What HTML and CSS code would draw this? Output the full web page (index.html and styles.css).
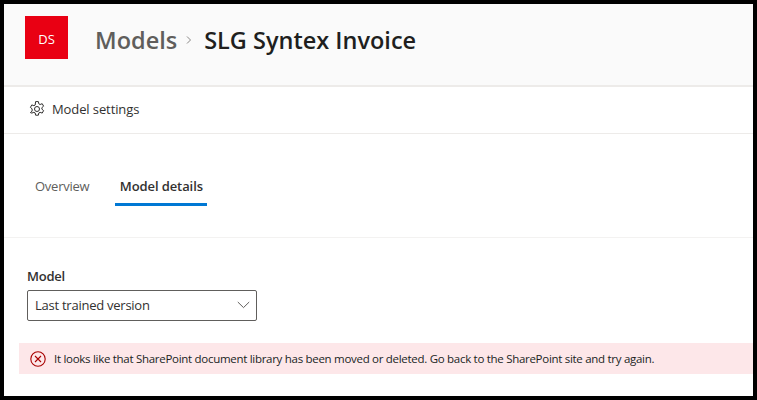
FILE: index.html
```html
<!DOCTYPE html>
<html lang="en">
<head>
<meta charset="utf-8">
<title>SLG Syntex Invoice</title>
<link rel="stylesheet" href="styles.css">
</head>
<body>
<div class="frame">
  <header class="header">
    <div class="avatar">DS</div>
    <div class="crumbs">
      <span class="crumb">Models</span>
      <svg class="crumb-sep" width="8" height="10" viewBox="0 0 8 10"><path d="M2 1.500 5.500 5 2 8.500" fill="none" stroke="#8a8886" stroke-width="1"/></svg>
      <span class="crumb-current">SLG Syntex Invoice</span>
    </div>
  </header>
  <div class="toolbar">
    <svg class="gear" width="16" height="16" viewBox="0 0 16 16" fill="none" stroke="#323130" stroke-width="1" stroke-linejoin="round"><path d="M6.600 .6h2.800l.4 2.200 1.300.7 2.100-.8 1.400 2.500-1.700 1.400v1.600l1.700 1.400-1.400 2.500-2.100-.8-1.300.7-.4 2.200H6.600l-.4-2.200-1.300-.7-2.100.8L1.400 11.600l1.700-1.400V7.800L1.400 6.400l1.400-2.500 2.100.8 1.300-.7z"/><circle cx="8" cy="8" r="2.500"/></svg>
    <span class="toolbar-label">Model settings</span>
  </div>
  <nav class="tabs">
    <div class="tab">Overview</div>
    <div class="tab tab-active">Model details</div>
  </nav>
  <section class="content">
    <div class="field-label">Model</div>
    <div class="select">
      <span class="select-value">Last trained version</span>
      <svg width="13" height="8" viewBox="0 0 13 8"><path d="M.8 1 6.500 6.600 12.200 1" fill="none" stroke="#605e5c" stroke-width="1"/></svg>
    </div>
    <div class="error">
      <svg class="error-icon" width="16" height="16" viewBox="0 0 16 16" fill="none" stroke="#a80000" stroke-width="1.100"><circle cx="8" cy="8" r="7.200"/><path d="M5 5l6 6M11 5l-6 6"/></svg>
      <span class="error-text">It looks like that SharePoint document library has been moved or deleted. Go back to the SharePoint site and try again.</span>
    </div>
  </section>
</div>
</body>
</html>
```
FILE: styles.css
```css
* { box-sizing: border-box; }
html, body { margin: 0; height: 100%; background: #000; }
body { padding: 4px; font-family: "Open Sans", "Noto Sans", sans-serif; overflow: hidden; }
.frame { height: 392px; background: #fff; color: #323130; }
.header { height: 83px; background: #fafafa; border-bottom: 2px solid #edebe9; display: flex; align-items: flex-start; padding: 12px 0 0 21px; }
.avatar { width: 43px; height: 43px; padding-top: 3px; background: #e90013; color: #fff; font-size: 13px; display: flex; align-items: center; justify-content: center; }
.crumbs { display: flex; align-items: center; margin: 9px 0 0 27px; height: 30px; }
.crumb { font-size: 23.500px; font-weight: 600; color: #605e5c; }
.crumb-sep { margin: 0 11px 0 8px; }
.crumb-current { font-size: 23.500px; font-weight: 600; color: #201f1e; }
.toolbar { height: 47px; border-bottom: 1px solid #edebe9; display: flex; align-items: center; padding: 0 0 2px 25px; }
.gear { margin-right: 7px; }
.toolbar-label { font-size: 13px; letter-spacing: -.1px; }
.tabs { height: 104px; border-bottom: 1px solid #f3f2f1; display: flex; padding: 40px 0 0 23px; align-items: flex-start; gap: 18px; }
.tab { font-size: 13px; height: 31px; padding: 0 8px; line-height: 24px; color: #605e5c; letter-spacing: -.25px; white-space: nowrap; }
.tab-active { font-weight: 600; color: #323130; border-bottom: 3px solid #0078d4; padding: 0; width: 92px; height: 32px; text-align: center; letter-spacing: -.1px; }
.content { padding: 29px 0 0 0; }
.field-label { font-size: 13px; font-weight: 600; margin-left: 23px; line-height: 18px; letter-spacing: -.25px; }
.select { margin: 5px 0 0 23px; width: 230px; height: 31px; border: 1px solid #605e5c; border-radius: 2px; display: flex; align-items: center; justify-content: space-between; padding: 0 6px 2px 7px; }
.select-value { font-size: 13px; letter-spacing: -.25px; }
.error { margin: 22px 0 0 15px; height: 31px; background: #fde7e9; display: flex; align-items: center; padding: 0 0 0 11px; gap: 8px; }
.error-text { font-size: 11.500px; letter-spacing: -.29px; color: #201f1e; white-space: nowrap; }
```
